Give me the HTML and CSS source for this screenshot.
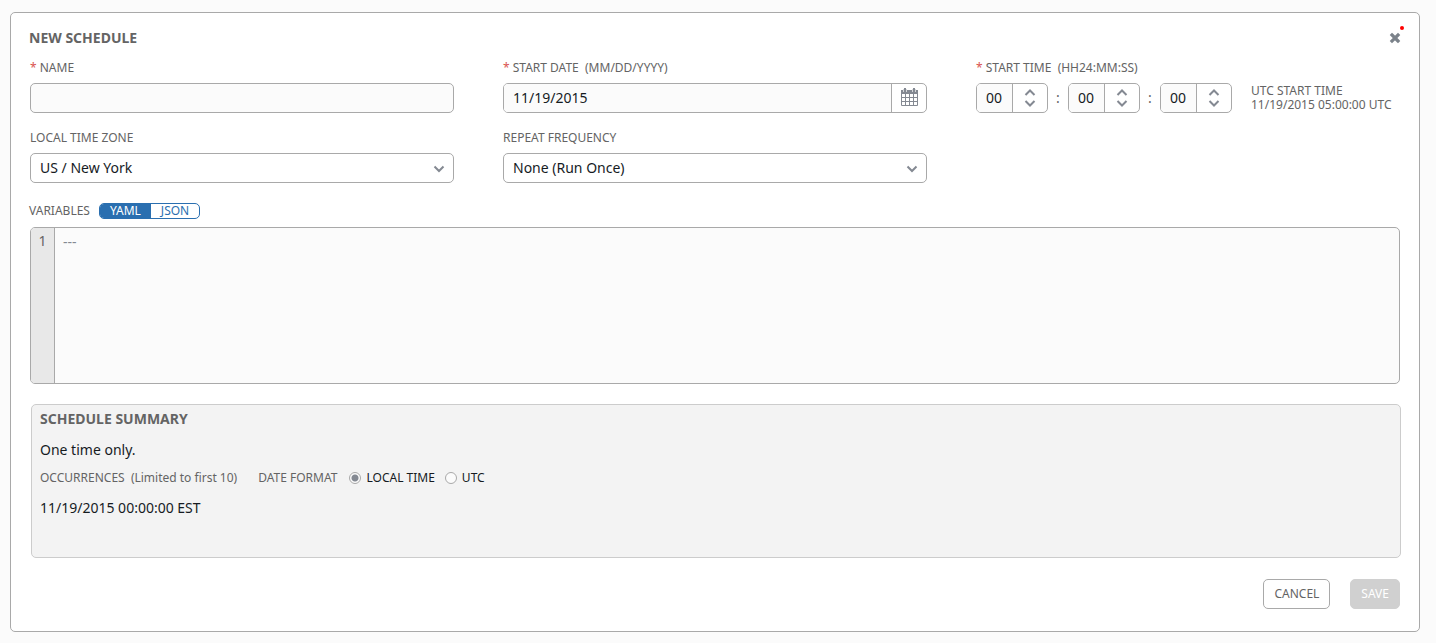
FILE: index.html
```html
<!DOCTYPE html>
<html lang="en">
<head>
<meta charset="utf-8">
<title>New Schedule</title>
<link rel="stylesheet" href="styles.css">
</head>
<body>
<form class="panel">
  <header class="panel-head">
    <h1 class="heading">NEW SCHEDULE</h1>
    <button class="close" type="button" aria-label="Close">
      <svg width="12" height="12" viewBox="0 0 12 12"><path d="M3 3l6 6M9 3l-6 6" fill="none" stroke="#7b828a" stroke-width="3.200" stroke-linecap="square"/></svg>
      <span class="dot"></span>
    </button>
  </header>

  <div class="fields">
    <div class="field">
      <label class="label" for="name"><span class="req">*</span> NAME</label>
      <input class="control" id="name" type="text">
    </div>
    <div class="field">
      <label class="label" for="date"><span class="req">*</span> START DATE &nbsp;(MM/DD/YYYY)</label>
      <div class="group">
        <input class="group-input" id="date" type="text" value="11/19/2015">
        <button class="addon" type="button" aria-label="Choose date">
          <svg width="17" height="20" viewBox="0 0 17 20"><path d="M0 2h17v4H0z" fill="#848992"/><path d="M3 0h2v3H3zM12 0h2v3h-2z" fill="#848992"/><path d="M2.500 1v3M5.500 1v3M11.500 1v3M14.500 1v3" stroke="#d4d6d9" stroke-width="1"/><path d="M.5 6v11.500h16V6M0 9.500h17M0 13.500h17M4.500 6v11M8.500 6v11M12.500 6v11" fill="none" stroke="#848992" stroke-width="1"/></svg>
        </button>
      </div>
    </div>
    <div class="field">
      <label class="label" for="hour"><span class="req">*</span> START TIME &nbsp;(HH24:MM:SS)</label>
      <div class="time">
        <div class="group spin">
          <input class="group-input" id="hour" type="text" value="00">
          <div class="addon arrows"><button class="step" type="button" aria-label="Hour up"><svg width="12" height="8" viewBox="0 0 12 8"><path class="chev" d="M1.500 7L6 2.500 10.500 7"/></svg></button><button class="step" type="button" aria-label="Hour down"><svg width="12" height="8" viewBox="0 0 12 8"><path class="chev" d="M1.500 1L6 5.500 10.500 1"/></svg></button></div>
        </div>
        <span class="colon">:</span>
        <div class="group spin">
          <input class="group-input" aria-label="Minute" type="text" value="00">
          <div class="addon arrows"><button class="step" type="button" aria-label="Minute up"><svg width="12" height="8" viewBox="0 0 12 8"><path class="chev" d="M1.500 7L6 2.500 10.500 7"/></svg></button><button class="step" type="button" aria-label="Minute down"><svg width="12" height="8" viewBox="0 0 12 8"><path class="chev" d="M1.500 1L6 5.500 10.500 1"/></svg></button></div>
        </div>
        <span class="colon">:</span>
        <div class="group spin">
          <input class="group-input" aria-label="Second" type="text" value="00">
          <div class="addon arrows"><button class="step" type="button" aria-label="Second up"><svg width="12" height="8" viewBox="0 0 12 8"><path class="chev" d="M1.500 7L6 2.500 10.500 7"/></svg></button><button class="step" type="button" aria-label="Second down"><svg width="12" height="8" viewBox="0 0 12 8"><path class="chev" d="M1.500 1L6 5.500 10.500 1"/></svg></button></div>
        </div>
        <div class="utc">UTC START TIME<br>11/19/2015 05:00:00 UTC</div>
      </div>
    </div>
    <div class="field">
      <label class="label" for="zone">LOCAL TIME ZONE</label>
      <div class="select">
        <select class="control" id="zone"><option>US / New York</option></select>
        <svg class="caret" width="12" height="8" viewBox="0 0 12 8"><path class="chev" d="M1.500 1.500L6 6l4.500-4.500"/></svg>
      </div>
    </div>
    <div class="field">
      <label class="label" for="repeat">REPEAT FREQUENCY</label>
      <div class="select">
        <select class="control" id="repeat"><option>None (Run Once)</option></select>
        <svg class="caret" width="12" height="8" viewBox="0 0 12 8"><path class="chev" d="M1.500 1.500L6 6l4.500-4.500"/></svg>
      </div>
    </div>
  </div>

  <div class="variables">
    <label class="label" for="vars">VARIABLES</label>
    <div class="toggle">
      <button class="toggle-btn on" type="button">YAML</button>
      <button class="toggle-btn" type="button">JSON</button>
    </div>
  </div>
  <div class="editor">
    <div class="gutter">1</div>
    <textarea class="code" id="vars">---</textarea>
  </div>

  <section class="summary">
    <h2 class="heading">SCHEDULE SUMMARY</h2>
    <p class="text once">One time only.</p>
    <div class="occurrences">
      <span class="label">OCCURRENCES &nbsp;(Limited to first 10)</span>
      <span class="label format">DATE FORMAT</span>
      <label class="choice"><input class="radio" type="radio" name="fmt" checked>LOCAL TIME</label>
      <label class="choice"><input class="radio" type="radio" name="fmt">UTC</label>
    </div>
    <p class="text">11/19/2015 00:00:00 EST</p>
  </section>

  <footer class="actions">
    <button class="btn" type="button">CANCEL</button>
    <button class="btn save" type="submit" disabled>SAVE</button>
  </footer>
</form>
</body>
</html>
```
FILE: styles.css
```css
* { box-sizing: border-box; }
body {
  margin: 0;
  padding: 12px 16px 11px 10px;
  background: #fbfbfb;
  color: #161b1f;
  font: 14px/20px "Noto Sans", sans-serif;
}
button, input, select, textarea { margin: 0; font: inherit; color: inherit; outline: 0; }
button { padding: 0; border: 0; background: none; cursor: pointer; }
.panel {
  padding: 15px 19px 22px;
  border: 1px solid #a9a9a9;
  border-radius: 5px;
  background: #fff;
}
.panel-head { display: flex; justify-content: space-between; align-items: center; margin: 0 -1px 10px; }
.heading { margin: 0; color: #646464; font-size: 14px; line-height: 20px; font-weight: 700; }
.close { position: relative; display: flex; }
.dot { position: absolute; top: -6px; right: -3px; width: 4px; height: 4px; border-radius: 50%; background: #f00; }
.fields { display: grid; grid-template-columns: repeat(3, minmax(0, 1fr)); gap: 15px 49px; }
.field { display: flex; flex-direction: column; gap: 5px; }
.label { color: #646464; font-size: 12px; line-height: 20px; white-space: nowrap; }
.req { color: #d9534f; }
.control {
  width: 100%;
  height: 30px;
  padding: 0 9px;
  border: 1px solid #a9a9a9;
  border-radius: 5px;
  background: #fbfbfb;
}
.select { position: relative; }
.select .control { display: block; appearance: none; background: #fff; }
.caret { position: absolute; top: 12px; right: 9px; pointer-events: none; }
.chev { fill: none; stroke: #848992; stroke-width: 2; }
.group { display: flex; height: 30px; border: 1px solid #a9a9a9; border-radius: 5px; background: #fff; overflow: hidden; }
.group-input { flex: 1; width: 0; min-width: 0; padding: 0 9px; border: 0; background: #fbfbfb; }
.addon { display: flex; align-items: center; justify-content: center; width: 35px; border-left: 1px solid #a9a9a9; }
.time { display: flex; align-items: center; }
.spin { flex: none; width: 72px; }
.arrows { flex-direction: column; gap: 4px; }
.step { display: flex; }
.colon { width: 20px; text-align: center; color: #646464; }
.utc { margin-left: 19px; color: #646464; font-size: 12px; line-height: 14px; white-space: nowrap; }
.variables { display: flex; align-items: center; gap: 9px; margin: 18px -1px 6px; }
.toggle { display: flex; height: 16px; border: 1px solid #2a6fb0; border-radius: 5px; overflow: hidden; }
.toggle-btn { padding: 0 10px; color: #2a6fb0; font-size: 12px; line-height: 14px; }
.toggle-btn.on { background: #2a6fb0; color: #fff; }
.editor { display: flex; height: 157px; border: 1px solid #a9a9a9; border-radius: 5px; background: #fbfbfb; overflow: hidden; }
.gutter { width: 24px; padding-top: 3px; border-right: 1px solid #a9a9a9; background: #e8e8e8; color: #646464; text-align: center; }
.code { flex: 1; padding: 4px 8px; border: 0; background: none; color: #848992; resize: none; }
.summary { margin: 20px -1px 21px 1px; padding: 4px 8px 39px; border: 1px solid #ccc; border-radius: 5px; background: #f3f3f3; }
.text { margin: 0; }
.once { margin: 11px 0 8px; }
.occurrences { display: flex; align-items: center; margin-bottom: 10px; }
.format { margin: 0 12px 0 21px; }
.choice { display: flex; align-items: center; gap: 5px; margin-right: 10px; font-size: 12px; }
.radio { appearance: none; width: 12px; height: 12px; border: 1px solid #a9a9a9; border-radius: 50%; background: #fbfbfb; }
.radio:checked { background: radial-gradient(circle, #848992 3px, #fbfbfb 4px); }
.actions { display: flex; justify-content: flex-end; gap: 20px; }
.btn { height: 30px; padding: 0 10px; border: 1px solid #a9a9a9; border-radius: 5px; background: #fff; color: #646464; font-size: 12px; }
.save { border-color: #d0d0d0; background: #d0d0d0; color: #fff; }
```
